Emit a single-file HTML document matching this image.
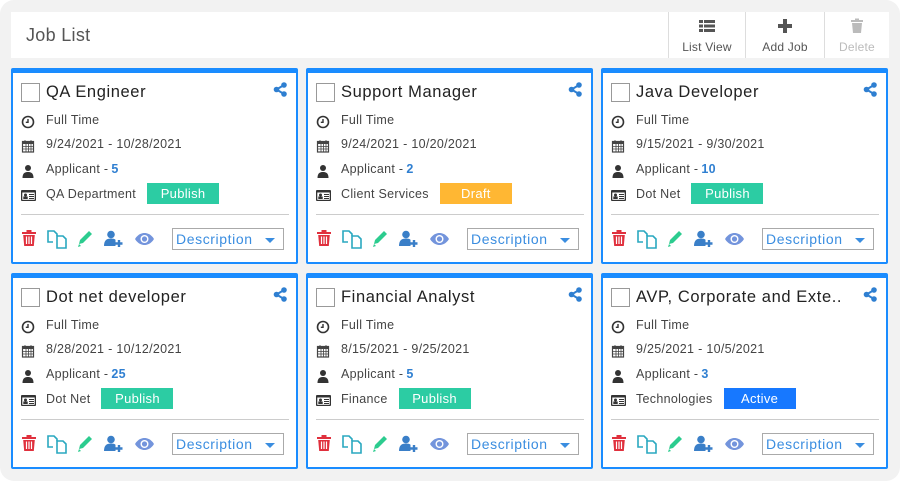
<!DOCTYPE html>
<html><head><meta charset="utf-8"><style>
*{box-sizing:border-box;margin:0;padding:0}
body{width:900px;height:481px;background:#fff;font-family:"Liberation Sans",sans-serif;overflow:hidden;position:relative}
.bg{position:absolute;left:0;top:0;width:900px;height:481px;background:#f2f2f2;border-radius:14px}
.hdr{position:absolute;left:11px;top:12px;width:878px;height:46px;background:#fff}
.hdr .t{position:absolute;left:15px;top:13px;font-size:18px;color:#555;letter-spacing:.3px}
.tb{position:absolute;top:0;height:46px;border-left:1px solid #ddd;text-align:center;font-size:12px;color:#555;letter-spacing:.2px}
.tb span{position:absolute;bottom:4px;left:0;right:0}
.tb svg{position:absolute;top:6px;left:50%;margin-left:-9px}
.card{position:absolute;width:287px;height:196px;background:#fff;border:2px solid #1a8cff;border-top:5px solid #1a8cff;border-radius:2px}
.card>*{position:absolute}
.cb{left:8px;top:10px;width:19px;height:19px;border:1px solid #999;background:#fff}
.ti{left:33px;top:10px;font-size:16.5px;color:#222;white-space:nowrap;letter-spacing:.6px}
.sh{right:8px;top:9px}
.ic{left:8px;width:14px;height:14px}
.tx{left:33px;font-size:12.5px;color:#444;white-space:nowrap;display:flex;align-items:center;letter-spacing:.3px}
.tx b{color:#2f7fd1;font-weight:bold;margin-left:3px}
.bd{display:inline-block;width:72px;height:21px;line-height:21px;text-align:center;color:#fff;font-size:13px;margin-left:11px;letter-spacing:.3px}
.pub{background:#2ccca3}.dr{background:#ffb733}.ac{background:#1778ff}
.dv{left:8px;width:268px;top:141px;border-top:1px solid #ccc}
.ds{left:159px;top:155px;width:112px;height:22px;border:1px solid #aaa;color:#3a8de0;font-size:14px;padding:2px 0 0 3px;letter-spacing:.6px}
.ds i{position:absolute;right:8px;top:9px;border-left:5px solid transparent;border-right:5px solid transparent;border-top:5px solid #3a8de0}
</style></head><body>
<div class="bg"></div>
<div class="hdr"><div class="t">Job List</div>
<div class="tb" style="left:657px;width:77px"><svg width="18" height="16" viewBox="0 0 18 16"><g fill="#555"><rect x="1" y="2" width="4" height="3"/><rect x="6" y="2" width="11" height="3"/><rect x="1" y="6.5" width="4" height="3"/><rect x="6" y="6.5" width="11" height="3"/><rect x="1" y="11" width="4" height="3"/><rect x="6" y="11" width="11" height="3"/></g></svg><span>List View</span></div>
<div class="tb" style="left:734px;width:79px"><svg width="18" height="16" viewBox="0 0 18 16"><path d="M7 1h4v5h5v4h-5v5H7v-5H2V6h5z" fill="#555"/></svg><span>Add Job</span></div>
<div class="tb" style="left:813px;width:65px;color:#bbb"><svg width="18" height="16" viewBox="0 0 18 16"><g fill="#bbb"><rect x="3" y="2" width="12" height="2"/><rect x="7" y="0.5" width="4" height="2"/><path d="M4 5h10l-1 10H5z"/></g></svg><span>Delete</span></div>
</div>

<svg width="0" height="0" style="position:absolute"><defs>
<g id="clk"><circle cx="7" cy="7" r="5.5" fill="none" stroke="#333" stroke-width="1.6"/><path d="M7 4v3.3H4.8" fill="none" stroke="#333" stroke-width="1.4"/></g>
<g id="cal"><rect x="1.5" y="2.5" width="11" height="10.5" fill="none" stroke="#444" stroke-width="1.2"/><rect x="1.5" y="2.5" width="11" height="2.5" fill="#444"/><path d="M4 1v3M10 1v3M1.5 7.5h11M1.5 10h11M5 5v8M7.5 5v8M10 5v8" stroke="#444" stroke-width=".8"/></g>
<g id="usr"><circle cx="7" cy="4" r="3" fill="#333"/><path d="M1.5 14c0-5 2.5-6 5.5-6s5.5 1 5.5 6z" fill="#333"/></g>
<g id="idc"><rect x="0" y="2" width="15" height="11" rx="1" fill="#333"/><rect x="1.3" y="4.5" width="12.4" height="7.3" fill="#fff"/><circle cx="4.5" cy="7" r="1.5" fill="#333"/><rect x="2.3" y="8.5" width="4.4" height="2.5" fill="#333"/><path d="M8 6.5h5M8 8.5h5M8 10.5h5" stroke="#333" stroke-width="1"/></g>
<g id="shr"><circle cx="11" cy="3" r="2.8" fill="#2f7fd1"/><circle cx="11" cy="12" r="2.8" fill="#2f7fd1"/><circle cx="3.5" cy="7.5" r="2.8" fill="#2f7fd1"/><path d="M11 3L3.5 7.5 11 12" stroke="#2f7fd1" stroke-width="2" fill="none"/></g>
<g id="acts">
<g fill="#e0303d"><rect x="0" y="2" width="14" height="2"/><rect x="4.5" y="0" width="5" height="2"/><path d="M1.2 5h11.6l-1 11H2.2z"/></g><path d="M4.5 6.5v7.5M7 6.5v7.5M9.5 6.5v7.5" stroke="#fff" stroke-width="1.2"/>
<g fill="none" stroke="#2aa8c0" stroke-width="1.6"><path d="M31 12h-5V1h6l3 3v2"/><path d="M35 6h6l3 3v9h-9z"/></g>
<path d="M57 14l1-4 9-9 3 3-9 9z" fill="#2ccc8f"/><path d="M56 17l1-3 2 2z" fill="#2ccc8f"/>
<circle cx="89" cy="4.5" r="3.8" fill="#3a7fc8"/><path d="M82 16c0-6 3-7.5 7-7.5 2 0 3.5.4 4.5 1.2V16z" fill="#3a7fc8"/><path d="M97 10v7M93.5 13.5h7" stroke="#3a7fc8" stroke-width="2.4"/>
<path d="M113 9c3-5 7-6 9.5-6s6.5 1 9.5 6c-3 5-7 6-9.5 6s-6.5-1-9.5-6z" fill="#7394dc"/><circle cx="122.5" cy="9" r="4" fill="#fff"/><circle cx="122.5" cy="9" r="2.6" fill="#7394dc"/>
</g>
</defs></svg>

<div class="card" style="left:11px;top:68px">
<div class="cb"></div><div class="ti">QA Engineer</div><svg class="sh" width="15" height="15"><use href="#shr"/></svg>
<svg class="ic" style="top:42px"><use href="#clk"/></svg><div class="tx" style="top:40px">Full Time</div>
<svg class="ic" style="top:66px"><use href="#cal"/></svg><div class="tx" style="top:64px">9/24/2021 - 10/28/2021</div>
<svg class="ic" style="top:91px"><use href="#usr"/></svg><div class="tx" style="top:89px">Applicant - <b>5</b></div>
<svg class="ic" style="top:115px;width:16px"><use href="#idc"/></svg><div class="tx" style="top:110px;height:21px">QA Department<span class="bd pub">Publish</span></div>
<div class="dv"></div>
<svg style="left:9px;top:157px" width="145" height="19"><use href="#acts"/></svg>
<div class="ds">Description<i></i></div></div>

<div class="card" style="left:306px;top:68px">
<div class="cb"></div><div class="ti">Support Manager</div><svg class="sh" width="15" height="15"><use href="#shr"/></svg>
<svg class="ic" style="top:42px"><use href="#clk"/></svg><div class="tx" style="top:40px">Full Time</div>
<svg class="ic" style="top:66px"><use href="#cal"/></svg><div class="tx" style="top:64px">9/24/2021 - 10/20/2021</div>
<svg class="ic" style="top:91px"><use href="#usr"/></svg><div class="tx" style="top:89px">Applicant - <b>2</b></div>
<svg class="ic" style="top:115px;width:16px"><use href="#idc"/></svg><div class="tx" style="top:110px;height:21px">Client Services<span class="bd dr">Draft</span></div>
<div class="dv"></div>
<svg style="left:9px;top:157px" width="145" height="19"><use href="#acts"/></svg>
<div class="ds">Description<i></i></div></div>

<div class="card" style="left:601px;top:68px">
<div class="cb"></div><div class="ti">Java Developer</div><svg class="sh" width="15" height="15"><use href="#shr"/></svg>
<svg class="ic" style="top:42px"><use href="#clk"/></svg><div class="tx" style="top:40px">Full Time</div>
<svg class="ic" style="top:66px"><use href="#cal"/></svg><div class="tx" style="top:64px">9/15/2021 - 9/30/2021</div>
<svg class="ic" style="top:91px"><use href="#usr"/></svg><div class="tx" style="top:89px">Applicant - <b>10</b></div>
<svg class="ic" style="top:115px;width:16px"><use href="#idc"/></svg><div class="tx" style="top:110px;height:21px">Dot Net<span class="bd pub">Publish</span></div>
<div class="dv"></div>
<svg style="left:9px;top:157px" width="145" height="19"><use href="#acts"/></svg>
<div class="ds">Description<i></i></div></div>

<div class="card" style="left:11px;top:273px">
<div class="cb"></div><div class="ti">Dot net developer</div><svg class="sh" width="15" height="15"><use href="#shr"/></svg>
<svg class="ic" style="top:42px"><use href="#clk"/></svg><div class="tx" style="top:40px">Full Time</div>
<svg class="ic" style="top:66px"><use href="#cal"/></svg><div class="tx" style="top:64px">8/28/2021 - 10/12/2021</div>
<svg class="ic" style="top:91px"><use href="#usr"/></svg><div class="tx" style="top:89px">Applicant - <b>25</b></div>
<svg class="ic" style="top:115px;width:16px"><use href="#idc"/></svg><div class="tx" style="top:110px;height:21px">Dot Net<span class="bd pub">Publish</span></div>
<div class="dv"></div>
<svg style="left:9px;top:157px" width="145" height="19"><use href="#acts"/></svg>
<div class="ds">Description<i></i></div></div>

<div class="card" style="left:306px;top:273px">
<div class="cb"></div><div class="ti">Financial Analyst</div><svg class="sh" width="15" height="15"><use href="#shr"/></svg>
<svg class="ic" style="top:42px"><use href="#clk"/></svg><div class="tx" style="top:40px">Full Time</div>
<svg class="ic" style="top:66px"><use href="#cal"/></svg><div class="tx" style="top:64px">8/15/2021 - 9/25/2021</div>
<svg class="ic" style="top:91px"><use href="#usr"/></svg><div class="tx" style="top:89px">Applicant - <b>5</b></div>
<svg class="ic" style="top:115px;width:16px"><use href="#idc"/></svg><div class="tx" style="top:110px;height:21px">Finance<span class="bd pub">Publish</span></div>
<div class="dv"></div>
<svg style="left:9px;top:157px" width="145" height="19"><use href="#acts"/></svg>
<div class="ds">Description<i></i></div></div>

<div class="card" style="left:601px;top:273px">
<div class="cb"></div><div class="ti">AVP, Corporate and Exte..</div><svg class="sh" width="15" height="15"><use href="#shr"/></svg>
<svg class="ic" style="top:42px"><use href="#clk"/></svg><div class="tx" style="top:40px">Full Time</div>
<svg class="ic" style="top:66px"><use href="#cal"/></svg><div class="tx" style="top:64px">9/25/2021 - 10/5/2021</div>
<svg class="ic" style="top:91px"><use href="#usr"/></svg><div class="tx" style="top:89px">Applicant - <b>3</b></div>
<svg class="ic" style="top:115px;width:16px"><use href="#idc"/></svg><div class="tx" style="top:110px;height:21px">Technologies<span class="bd ac">Active</span></div>
<div class="dv"></div>
<svg style="left:9px;top:157px" width="145" height="19"><use href="#acts"/></svg>
<div class="ds">Description<i></i></div></div>
</body></html>
